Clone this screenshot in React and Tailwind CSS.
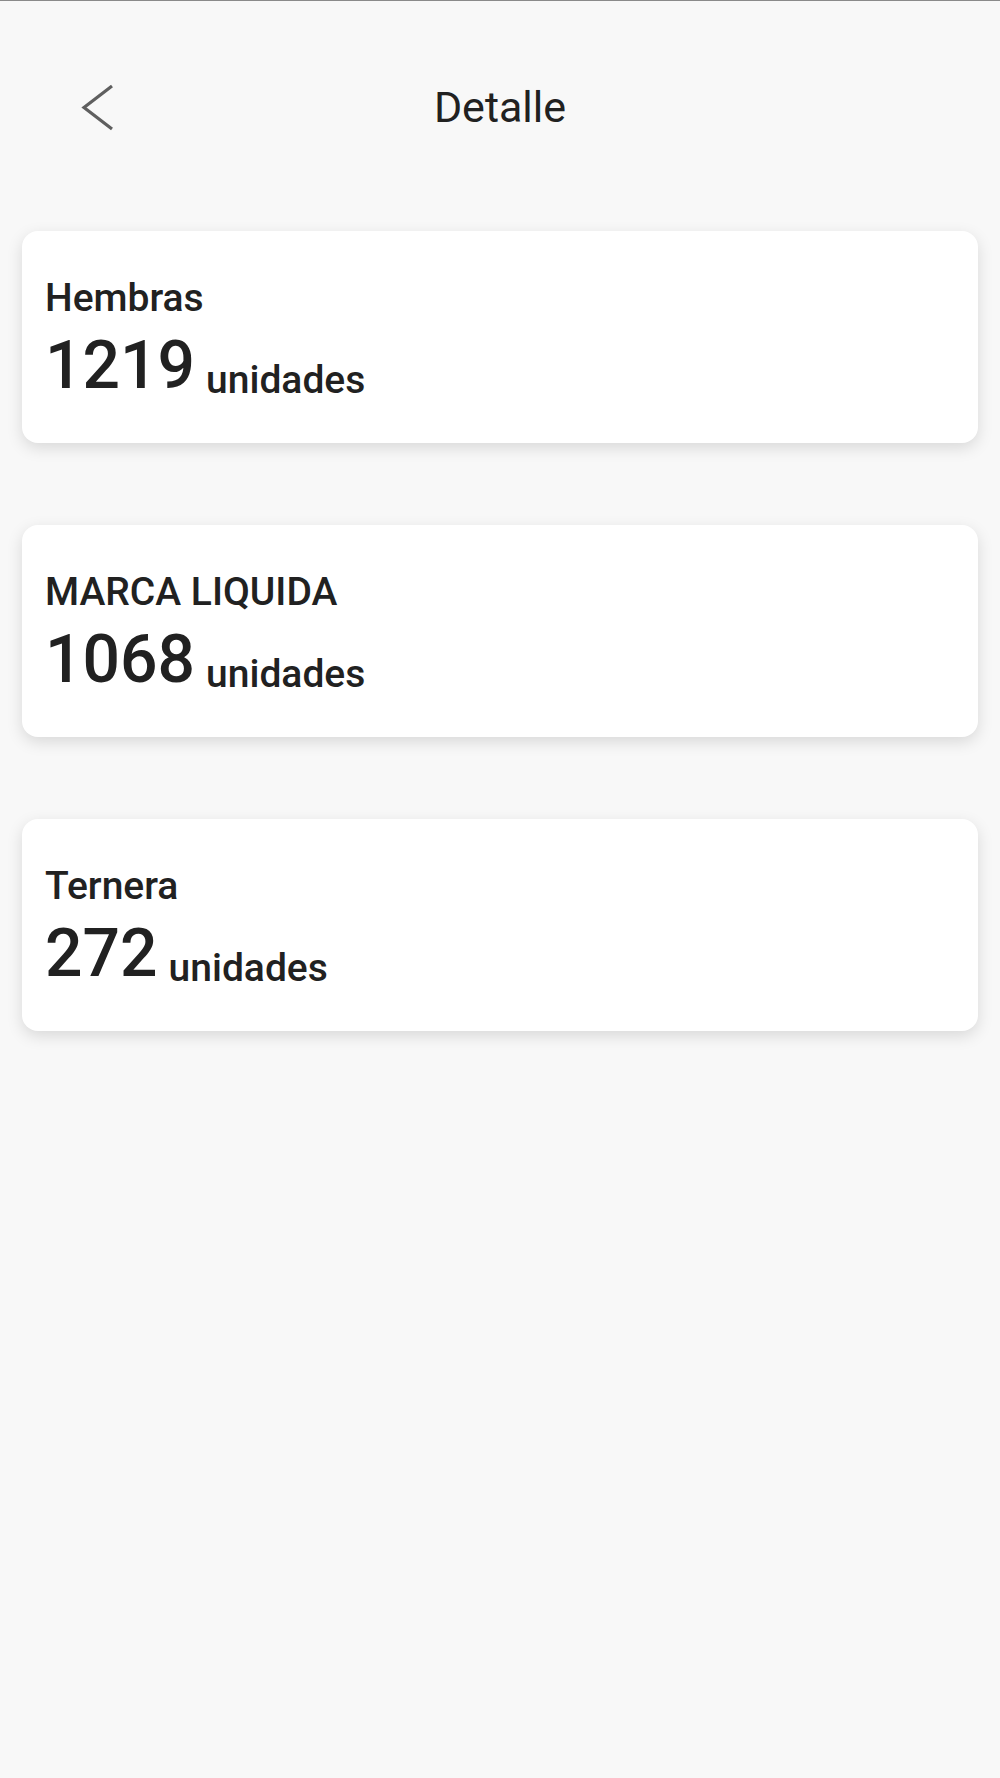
import React from "react";

const items = [
    { label: "Hembras", count: 1219 },
    { label: "MARCA LIQUIDA", count: 1068 },
    { label: "Ternera", count: 272 },
];

const StockCard = ({ label, count }) => (
    <div className="bg-white rounded-[16px] shadow-[0_5px_16px_rgba(0,0,0,0.13)] px-[23px] pt-[45px] pb-[40px]">
        <p className="text-[39px] leading-[44px] font-medium text-[#212121]">{label}</p>
        <div className="flex items-end mt-[8px]">
            <span className="text-[66px] leading-[75px] font-medium text-[#212121]">{count}</span>
            <span className="text-[39px] leading-[44px] font-medium text-[#212121] ml-[11px] mb-[1px]">unidades</span>
        </div>
    </div>
);

const App = () => {
    return (
        <div
            className="min-h-[1778px] bg-[#f8f8f8] border-t border-[#8a8a8a]"
            style={{ fontFamily: "Roboto, 'Liberation Sans', sans-serif" }}
        >
            {/* Header */}
            <div className="relative h-[212px] flex items-start justify-center pt-[81px]">
                <button className="absolute left-[80px] top-[80px] w-[36px] h-[52px] flex items-center justify-center">
                    <svg width="34" height="48" viewBox="0 0 34 48" fill="none">
                        <path d="M31 3 L3 24.5 L31 46" stroke="#5f5f5f" strokeWidth="3.2" strokeLinecap="butt" strokeLinejoin="miter" />
                    </svg>
                </button>
                <h1 className="text-[43px] leading-[50px] font-normal text-[#212121]">Detalle</h1>
            </div>

            {/* Cards */}
            <div className="px-[22px] pt-[18px] flex flex-col gap-[82px]">
                {items.map((item) => (
                    <StockCard key={item.label} label={item.label} count={item.count} />
                ))}
            </div>
        </div>
    );
};

export default App;
